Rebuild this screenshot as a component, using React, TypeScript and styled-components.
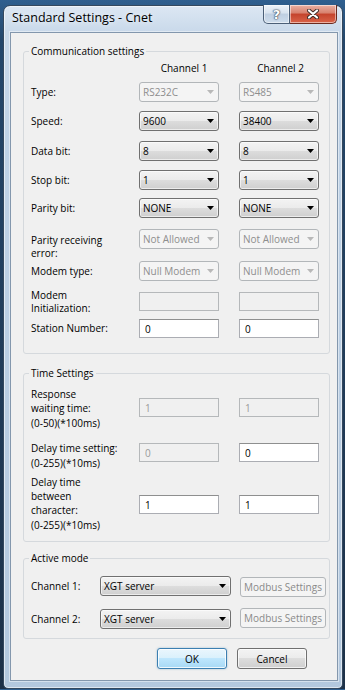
import styled, { createGlobalStyle, css } from "styled-components";

const GlobalStyle = createGlobalStyle`
  html, body { margin: 0; padding: 0; }
  body {
    background: linear-gradient(180deg, #2f5f8f 0px, #24476b 40px, #1d3148 100%);
    font-family: "Open Sans", "Noto Sans", sans-serif;
    font-size: 10px;
    color: #000;
    overflow: hidden;
  }
`;

const Window = styled.div`
  width: 340px;
  box-sizing: border-box;
  margin: 5px 0 0 3px;
  padding: 0 4px 7px 6px;
  border: 1px solid #34485e;
  border-radius: 7px 7px 5px 5px;
  background: linear-gradient(180deg, #dce7f3 0px, #c9d9ea 26px, #bfd2e6 140px, #b3c8de 100%);
  box-shadow: inset 0 0 0 1px rgba(255, 255, 255, 0.55);
  display: flex;
  flex-direction: column;
`;

const TitleBar = styled.div`
  height: 26px;
  display: flex;
  justify-content: space-between;
  align-items: flex-start;
`;

const Title = styled.div`
  margin: 4px 0 0 2px;
  font-size: 12.5px;
  line-height: 16px;
  color: #000;
  text-shadow: 0 0 6px rgba(255, 255, 255, 0.9);
`;

const CaptionButtons = styled.div`
  display: flex;
  margin: -1px 1px 0 0;
`;

const CaptionButton = styled.div<{ $close?: boolean }>`
  box-sizing: border-box;
  width: 27px;
  height: 19px;
  display: flex;
  align-items: center;
  justify-content: center;
  border: 1px solid #4b5f77;
  border-top: none;
  border-radius: 0 0 0 5px;
  background: linear-gradient(180deg, #eef3f9 0%, #d8e3ef 45%, #bfcfe1 50%, #cddcec 100%);
  box-shadow: inset 0 0 0 1px rgba(255, 255, 255, 0.5);
  color: #fff;
  font: bold 13px "DejaVu Sans", sans-serif;
  text-shadow: 0 0 1px #3a4a5c, 0 0 1px #3a4a5c, 0 0 2px #3a4a5c;

  ${(p) =>
    p.$close &&
    css`
      width: 47px;
      border-left: none;
      border-radius: 0 0 5px 0;
      border-color: #6b2a1f;
      background: linear-gradient(180deg, #eab0a2 0%, #d7806d 45%, #c4432c 50%, #d9644a 100%);
    `}
`;

const Client = styled.div`
  background: #f0f0f0;
  border: 1px solid #8397ad;
  box-shadow: 0 0 0 1px rgba(255, 255, 255, 0.45);
  padding: 12px 7px 11px 12px;
  display: flex;
  flex-direction: column;
`;

const GroupBox = styled.fieldset<{ $mt: number; $pt: number; $pb: number }>`
  margin: ${(p) => p.$mt}px 0 0;
  padding: ${(p) => p.$pt}px 9px ${(p) => p.$pb}px 7px;
  border: 1px solid #d5d9dd;
  border-radius: 3px;
  min-width: 0;
`;

const Legend = styled.legend`
  padding: 0 2px;
  margin-left: -2px;
  line-height: 13px;
`;

const ChannelGrid = styled.div<{ $mt: number; $h: number }>`
  display: grid;
  grid-template-columns: 88px 80px 80px;
  column-gap: 20px;
  align-items: start;
  height: ${(p) => p.$h}px;
  margin-top: ${(p) => p.$mt}px;
`;

const ColumnHead = styled.div<{ $shift: number }>`
  line-height: 13px;
  text-align: center;
  padding-left: ${(p) => p.$shift}px;
`;

const Label = styled.div<{ $top: number; $lh?: number }>`
  margin-top: ${(p) => p.$top}px;
  line-height: ${(p) => p.$lh ?? 13}px;
  white-space: nowrap;
`;

const Range = styled.div`
  margin-top: 1px;
`;

const Combo = styled.div<{ $disabled?: boolean; $w?: number; $mt?: number }>`
  box-sizing: border-box;
  width: ${(p) => p.$w ?? 80}px;
  height: 20px;
  margin-top: ${(p) => p.$mt ?? 0}px;
  padding: 0 4px 0 3px;
  display: flex;
  align-items: center;
  justify-content: space-between;
  border: 1px solid #707070;
  border-radius: 3px;
  background: linear-gradient(180deg, #f3f3f3 0%, #ebebeb 50%, #dddddd 50%, #cfcfcf 100%);
  box-shadow: inset 0 0 0 1px rgba(255, 255, 255, 0.6);
  color: #000;

  svg polygon {
    fill: #000;
  }

  ${(p) =>
    p.$disabled &&
    css`
      border-color: #b2b6b9;
      background: #f4f4f4;
      box-shadow: none;
      color: #8e8e8e;

      svg polygon {
        fill: #b8b8b8;
      }
    `}
`;

const Edit = styled.input<{ $mt?: number }>`
  box-sizing: border-box;
  width: 80px;
  height: 19px;
  margin: ${(p) => p.$mt ?? 0}px 0 0;
  padding: 0 0 0 5px;
  border: 1px solid #abadb3;
  border-top-color: #8e8f8f;
  border-radius: 0;
  background: #fff;
  font: inherit;
  color: #000;
  outline: none;

  &:disabled {
    border-color: #b5b8ba;
    background: #f0f0f0;
    color: #9a9a9a;
    -webkit-text-fill-color: #9a9a9a;
  }
`;

const ModeGrid = styled.div<{ $mt: number }>`
  display: grid;
  grid-template-columns: 60px 131px 86px;
  column-gap: 9px;
  align-items: start;
  height: 20px;
  margin-top: ${(p) => p.$mt}px;
`;

const PushButton = styled.button<{ $primary?: boolean; $w?: number; $mt?: number }>`
  box-sizing: border-box;
  width: ${(p) => p.$w ?? 70}px;
  height: 21px;
  margin: ${(p) => p.$mt ?? 0}px 0 0;
  padding: 0;
  border: 1px solid #707070;
  border-radius: 3px;
  background: linear-gradient(180deg, #f3f3f3 0%, #ebebeb 50%, #dddddd 50%, #cfcfcf 100%);
  box-shadow: inset 0 0 0 1px rgba(255, 255, 255, 0.7);
  font: inherit;
  color: #000;
  white-space: nowrap;

  &:disabled {
    height: 20px;
    border-color: #b2b6b9;
    background: #f4f4f4;
    box-shadow: none;
    color: #8a8a8a;
  }

  ${(p) =>
    p.$primary &&
    css`
      border-color: #3c7fb1;
      background: linear-gradient(180deg, #eaf6fd 0%, #d9f0fc 50%, #bee6fd 50%, #a7d9f5 100%);
      box-shadow: inset 0 0 0 1px rgba(255, 255, 255, 0.8), 0 0 2px rgba(60, 127, 177, 0.5);
    `}
`;

const ButtonRow = styled.div`
  display: flex;
  justify-content: flex-end;
  gap: 10px;
  margin-top: 9px;
  padding-right: 23px;
`;

function Arrow() {
  return (
    <svg width="7" height="4" viewBox="0 0 7 4">
      <polygon points="0,0 7,0 3.5,4" />
    </svg>
  );
}

function CloseGlyph() {
  return (
    <svg width="12" height="10" viewBox="0 0 12 10">
      <path d="M2 1.5 L10 8.5 M10 1.5 L2 8.5" stroke="#3b2a26" strokeWidth="4" strokeLinecap="round" />
      <path d="M2 1.5 L10 8.5 M10 1.5 L2 8.5" stroke="#fff" strokeWidth="2.2" strokeLinecap="round" />
    </svg>
  );
}

type CommRow = {
  label: string[];
  mt: number;
  h: number;
  lt: number;
  kind: "combo" | "edit";
  disabled?: boolean;
  values: [string, string];
};

const commRows: CommRow[] = [
  { label: ["Type:"], mt: 7, h: 20, lt: 4, kind: "combo", disabled: true, values: ["RS232C", "RS485"] },
  { label: ["Speed:"], mt: 9, h: 20, lt: 4, kind: "combo", values: ["9600", "38400"] },
  { label: ["Data bit:"], mt: 10, h: 20, lt: 4, kind: "combo", values: ["8", "8"] },
  { label: ["Stop bit:"], mt: 9, h: 20, lt: 4, kind: "combo", values: ["1", "1"] },
  { label: ["Parity bit:"], mt: 8, h: 20, lt: 4, kind: "combo", values: ["NONE", "NONE"] },
  { label: ["Parity receiving", "error:"], mt: 11, h: 20, lt: 5, kind: "combo", disabled: true, values: ["Not Allowed", "Not Allowed"] },
  { label: ["Modem type:"], mt: 12, h: 20, lt: 4, kind: "combo", disabled: true, values: ["Null Modem", "Null Modem"] },
  { label: ["Modem", "Initialization:"], mt: 11, h: 19, lt: -3, kind: "edit", disabled: true, values: ["", ""] },
  { label: ["Station Number:"], mt: 8, h: 19, lt: 3, kind: "edit", values: ["0", "0"] },
];

type TimeRow = {
  label: string[];
  range: string;
  mt: number;
  h: number;
  boxMt: number;
  values: { v: string; disabled?: boolean }[];
};

const timeRows: TimeRow[] = [
  { label: ["Response", "waiting time:"], range: "(0-50)(*100ms)", mt: 0, h: 43, boxMt: 11, values: [{ v: "1", disabled: true }, { v: "1", disabled: true }] },
  { label: ["Delay time setting:"], range: "(0-255)(*10ms)", mt: 11, h: 29, boxMt: 2, values: [{ v: "0", disabled: true }, { v: "0" }] },
  { label: ["Delay time", "between", "character:"], range: "(0-255)(*10ms)", mt: 5, h: 57, boxMt: 20, values: [{ v: "1" }, { v: "1" }] },
];

function Lines({ lines }: { lines: string[] }) {
  return (
    <>
      {lines.map((l) => (
        <div key={l}>{l}</div>
      ))}
    </>
  );
}

export default function App() {
  return (
    <>
      <GlobalStyle />
      <Window>
        <TitleBar>
          <Title>Standard Settings - Cnet</Title>
          <CaptionButtons>
            <CaptionButton>?</CaptionButton>
            <CaptionButton $close>
              <CloseGlyph />
            </CaptionButton>
          </CaptionButtons>
        </TitleBar>

        <Client>
          <GroupBox $mt={0} $pt={4} $pb={15}>
            <Legend>Communication settings</Legend>
            <ChannelGrid $mt={0} $h={13}>
              <div />
              <ColumnHead $shift={10}>Channel 1</ColumnHead>
              <ColumnHead $shift={3}>Channel 2</ColumnHead>
            </ChannelGrid>
            {commRows.map((row) => (
              <ChannelGrid key={row.label.join(" ")} $mt={row.mt} $h={row.h}>
                <Label $top={row.lt}>
                  <Lines lines={row.label} />
                </Label>
                {row.values.map((v, i) =>
                  row.kind === "combo" ? (
                    <Combo key={i} $disabled={row.disabled}>
                      <span>{v}</span>
                      <Arrow />
                    </Combo>
                  ) : (
                    <Edit key={i} disabled={row.disabled} defaultValue={v} />
                  )
                )}
              </ChannelGrid>
            ))}
          </GroupBox>

          <GroupBox $mt={13} $pt={7} $pb={9}>
            <Legend>Time Settings</Legend>
            {timeRows.map((row) => (
              <ChannelGrid key={row.label.join(" ")} $mt={row.mt} $h={row.h}>
                <Label $top={0} $lh={14}>
                  <Lines lines={row.label} />
                  <Range>{row.range}</Range>
                </Label>
                {row.values.map((b, i) => (
                  <Edit key={i} $mt={row.boxMt} disabled={b.disabled} defaultValue={b.v} />
                ))}
              </ChannelGrid>
            ))}
          </GroupBox>

          <GroupBox $mt={10} $pt={11} $pb={9}>
            <Legend>Active mode</Legend>
            <ModeGrid $mt={0}>
              <Label $top={4}>Channel 1:</Label>
              <Combo $w={131}>
                <span>XGT server</span>
                <Arrow />
              </Combo>
              <PushButton $w={86} $mt={1} disabled>
                Modbus Settings
              </PushButton>
            </ModeGrid>
            <ModeGrid $mt={13}>
              <Label $top={4}>Channel 2:</Label>
              <Combo $w={131}>
                <span>XGT server</span>
                <Arrow />
              </Combo>
              <PushButton $w={86} $mt={-1} disabled>
                Modbus Settings
              </PushButton>
            </ModeGrid>
          </GroupBox>

          <ButtonRow>
            <PushButton $primary>OK</PushButton>
            <PushButton>Cancel</PushButton>
          </ButtonRow>
        </Client>
      </Window>
    </>
  );
}
